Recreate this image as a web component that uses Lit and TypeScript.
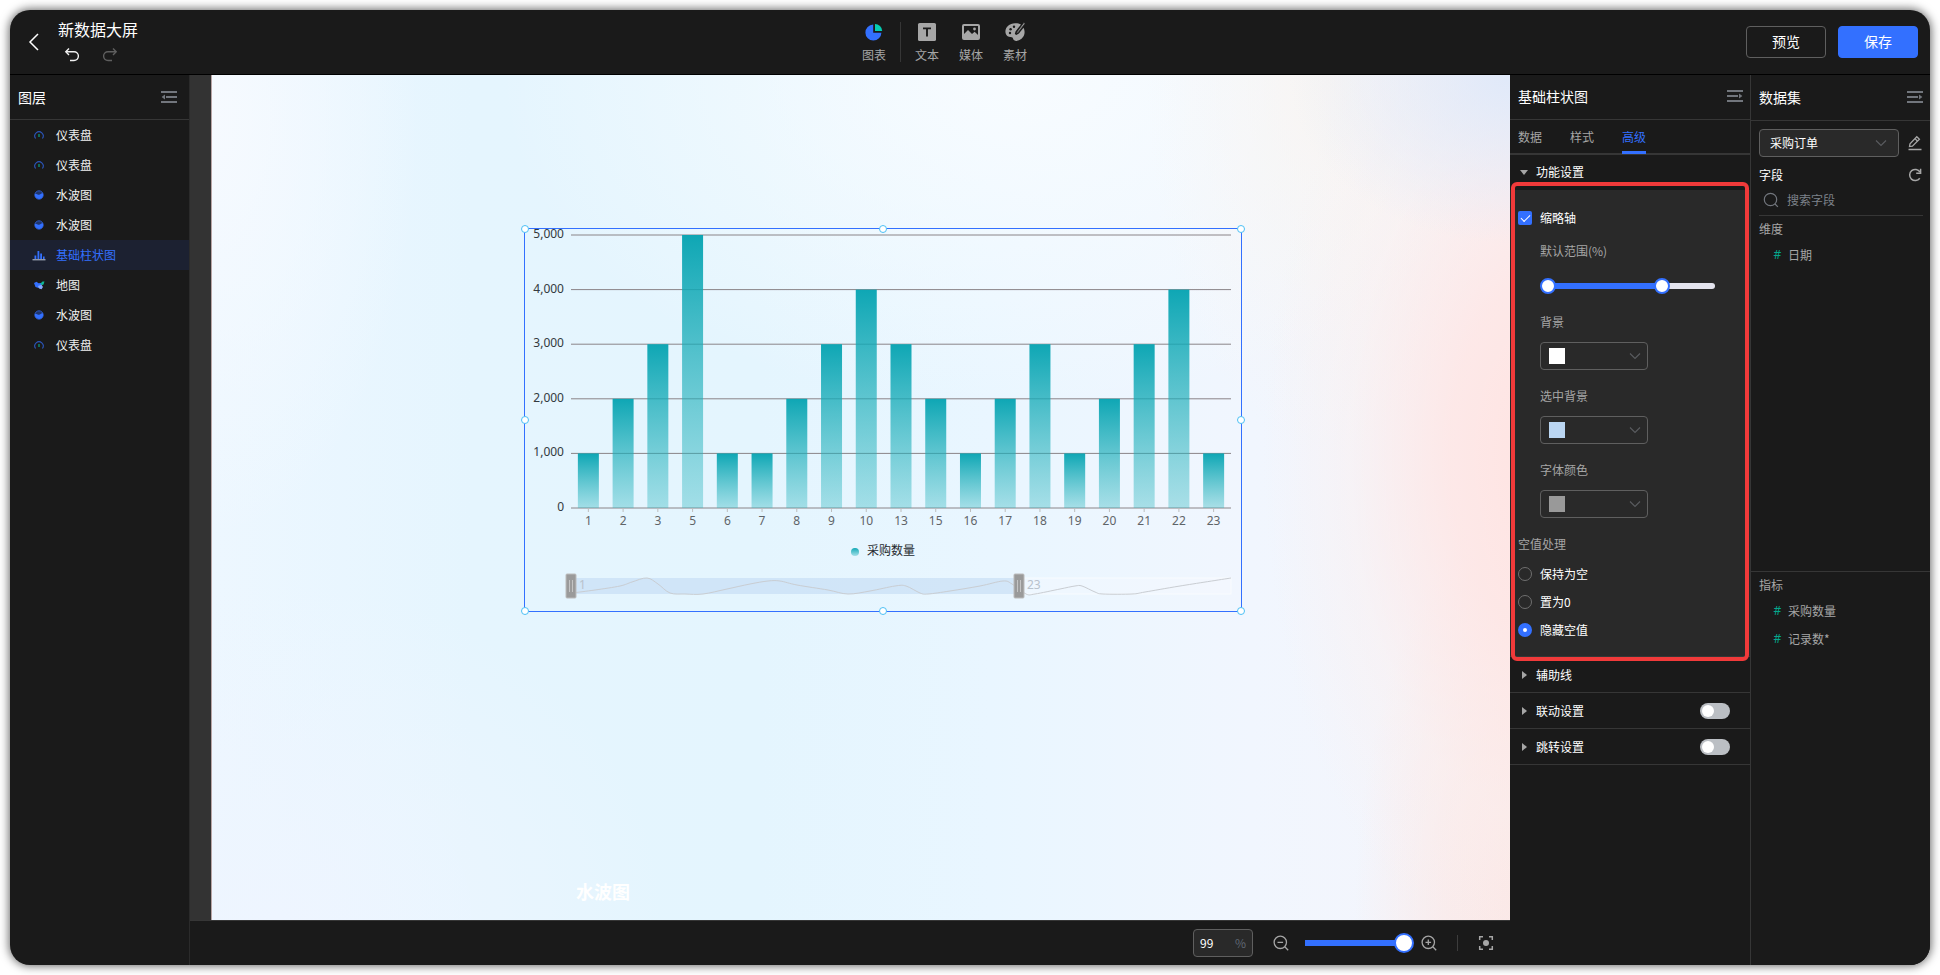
import { LitElement, html, css, svg } from "lit";
import { customElement, state } from "lit/decorators.js";
import { classMap } from "lit/directives/class-map.js";

const icons = {
  back: svg`<svg width="20" height="20" viewBox="0 0 20 20" fill="none" stroke="#fff" stroke-width="1.5"><path d="M14 2 6 10l8 8"/></svg>`,
  undo: svg`<svg width="16" height="16" viewBox="0 0 16 16" fill="none" stroke="#f0f0f0" stroke-width="1.4"><path d="M5 1.5 1.8 4.7 5 7.9"/><path d="M2 4.7h8a4.4 4.4 0 0 1 0 8.8H6"/></svg>`,
  redo: svg`<svg width="16" height="16" viewBox="0 0 16 16" fill="none" stroke="#5f5f5f" stroke-width="1.4"><path d="M11 1.5l3.2 3.2L11 7.9"/><path d="M14 4.7H6a4.4 4.4 0 0 0 0 8.8h4"/></svg>`,
  pie: svg`<svg width="20" height="20" viewBox="0 0 20 20"><path d="M9.2 2.6a8 8 0 1 0 8.2 8.2H9.2z" fill="#3370ff"/><path d="M11 2a7.3 7.3 0 0 1 7.2 7H11z" fill="#04cdb1"/></svg>`,
  text: svg`<svg width="20" height="20" viewBox="0 0 20 20"><rect x="1" y="1" width="18" height="18" rx="1.6" fill="#a6a6a6"/><path d="M6 6.4h8M10 6.4v8" stroke="#1a1a1a" stroke-width="1.9"/></svg>`,
  media: svg`<svg width="20" height="20" viewBox="0 0 20 20"><rect x="2" y="3" width="16" height="14" rx="1" fill="none" stroke="#a6a6a6" stroke-width="2"/><path d="M2.5 12.5 7 8l4 4 2.6-2.2 4 3.7V17h-15z" fill="#a6a6a6"/><circle cx="13.5" cy="7" r="1.4" fill="#a6a6a6"/></svg>`,
  palette: svg`<svg width="20" height="20" viewBox="0 0 20 20"><path d="M16 2.6C14 1.4 12 1.2 10 1.3 4.6 1.5.4 5 .4 9.6c0 3 1.9 5.4 4.9 5.3 2-.1 2.5.6 2.8 1.9.5 1.9 2.6 2.6 5 1.8 3.9-1.3 6.5-4.5 6.5-8.6 0-1.7-.4-3.1-1.1-4.3l-4.6 5.7-2.6 1.6-1.5-.9.7-2.6z" fill="#a6a6a6"/><path d="M18.9.6 12.4 9.4l-1 2 1.9-1.2L20 1.5z" fill="#a6a6a6" stroke="#1a1a1a" stroke-width=".5"/><g fill="#1a1a1a"><circle cx="5" cy="11" r="1.2"/><circle cx="5.6" cy="7.3" r="1.2"/><circle cx="9" cy="4.8" r="1.2"/></g></svg>`,
  foldLeft: svg`<svg width="16" height="16" viewBox="0 0 16 16" fill="none" stroke="#72767d" stroke-width="2"><path d="M0 3h16M5 8h11M0 13h16"/><path d="M4 5.5v5L.6 8z" fill="#72767d" stroke="none"/></svg>`,
  foldRight: svg`<svg width="16" height="16" viewBox="0 0 16 16" fill="none" stroke="#72767d" stroke-width="2"><path d="M0 3h16M0 8h11M0 13h16"/><path d="M12 5.5v5L15.4 8z" fill="#72767d" stroke="none"/></svg>`,
  edit: svg`<svg width="16" height="16" viewBox="0 0 16 16" fill="none" stroke="#a6a6a6" stroke-width="1.3"><path d="M2.5 11.5 3 8.7l6.8-7 2.6 2.5-7 7z"/><path d="M1.5 14.5h13"/><path d="m8 3.6 2.6 2.6"/></svg>`,
  refresh: svg`<svg width="16" height="16" viewBox="0 0 16 16" fill="none" stroke="#a6a6a6" stroke-width="1.5"><path d="M12.8 11.3A5.6 5.6 0 1 1 13 5"/><path d="M13.6 1.8v4.400H9.200"/></svg>`,
  search: svg`<svg width="16" height="16" viewBox="0 0 16 16" fill="none" stroke="#72767d" stroke-width="1.2"><circle cx="7.5" cy="7.5" r="6.2"/><path d="m12 12 2.900 2.900"/></svg>`,
  zoomOut: svg`<svg width="16" height="16" viewBox="0 0 16 16" fill="none" stroke="#a6a6a6" stroke-width="1.3"><circle cx="7.3" cy="7.3" r="6.2"/><path d="m11.8 11.8 3.4 3.4M4.5 7.3h5.6"/></svg>`,
  zoomIn: svg`<svg width="16" height="16" viewBox="0 0 16 16" fill="none" stroke="#a6a6a6" stroke-width="1.3"><circle cx="7.3" cy="7.3" r="6.2"/><path d="m11.8 11.8 3.4 3.4M4.5 7.3h5.6M7.3 4.5v5.6"/></svg>`,
  focus: svg`<svg width="16" height="16" viewBox="0 0 16 16" fill="none" stroke="#a6a6a6" stroke-width="1.5"><path d="M1.7 5V1.7H5M11 1.7h3.3V5M14.3 11v3.3H11M5 14.3H1.7V11"/><circle cx="8" cy="8" r="3" fill="#a6a6a6" stroke="none"/></svg>`,
  chevron: svg`<svg class="chev" width="12" height="12" viewBox="0 0 12 12" fill="none" stroke="#5a5c60" stroke-width="1.1"><path d="m1 3.500 5 5 5-5"/></svg>`,
};

const layerIcons: Record<string, unknown> = {
  gauge: svg`<svg width="14" height="14" viewBox="0 0 14 14"><path d="M3.600 10.500a4.200 4.200 0 1 1 6.800 0" fill="none" stroke="#2b56bd" stroke-width="1.100"/><path d="M7 6v3" stroke="#0b8f78" stroke-width="1.400"/></svg>`,
  liquid: svg`<svg width="14" height="14" viewBox="0 0 14 14"><circle cx="7" cy="7" r="4.200" fill="#1f366f" stroke="#2c56bd" stroke-width="1"/><path d="M2.900 6c1.500-1 2.600 1 4.100.8S9.500 4.500 11 5.500a4.200 4.200 0 1 1-8.100.5z" fill="#3370ff"/></svg>`,
  bar: svg`<svg width="14" height="14" viewBox="0 0 14 14"><path d="M2.500 7.500h1.800V11H2.500zM5.500 3h1.800v8H5.500zM8.200 5.500H10V11H8.200zM11 8.500h1.600V11H11z" fill="#3370ff"/><path d="M.5 11.800h13" stroke="#c4cbdc" stroke-width="1"/></svg>`,
  map: svg`<svg width="14" height="14" viewBox="0 0 14 14"><path d="M2 5 4.500 3.800l2 1.500L9 5l.5 2.500L6.500 10 3.500 9z" fill="#3370ff"/><path d="M8.500 5.500 10.500 3.500H12.500L11.500 6.500l-2 .8z" fill="#0fb795"/><path d="m6 8 3.500-1.300 1.500 2.300-1.500 2.300-2.500-.8z" fill="#85a9ff"/></svg>`,
};

const layers = [
  ["gauge", "仪表盘"], ["gauge", "仪表盘"], ["liquid", "水波图"], ["liquid", "水波图"],
  ["bar", "基础柱状图"], ["map", "地图"], ["liquid", "水波图"], ["gauge", "仪表盘"],
];

const series: [string, number][] = [
  ["1", 1000], ["2", 2000], ["3", 3000], ["5", 5000], ["6", 1000], ["7", 1000], ["8", 2000],
  ["9", 3000], ["10", 4000], ["13", 3000], ["15", 2000], ["16", 1000], ["17", 2000], ["18", 3000],
  ["19", 1000], ["20", 2000], ["21", 3000], ["22", 4000], ["23", 1000],
];

const overview: [number, number][] = [
  [47, 364], [70, 361], [95, 357], [107, 353], [122, 349], [133, 355], [145, 364], [160, 365], [178, 365],
  [202, 360], [225, 355], [243, 352], [255, 352], [272, 356], [303, 361], [323, 365], [345, 362],
  [370, 357], [381, 357], [395, 364], [403, 365], [425, 362], [455, 357], [478, 352], [487, 355],
  [501, 365], [510, 365], [535, 360], [550, 357], [557, 357], [570, 363], [578, 365], [607, 365],
  [620, 363], [655, 357], [706, 349],
];

function smooth(points: [number, number][]): string {
  let d = `M${points[0][0]} ${points[0][1]}`;
  for (let i = 0; i < points.length - 1; i++) {
    const p = points[Math.max(0, i - 1)], a = points[i], b = points[i + 1];
    const n = points[Math.min(points.length - 1, i + 2)];
    d += `C${a[0] + (b[0] - p[0]) / 6} ${a[1] + (b[1] - p[1]) / 6} ${b[0] - (n[0] - a[0]) / 6} ${b[1] - (n[1] - a[1]) / 6} ${b[0]} ${b[1]}`;
  }
  return d;
}

const controls = css`
  :host { box-sizing: border-box; font-family: "Noto Sans CJK SC", "Noto Sans", sans-serif; font-size: 12px; line-height: 20px; color: #fff; }
  * { box-sizing: border-box; }
  button, input, select { font: inherit; color: inherit; margin: 0; }
  button { background: none; border: 0; padding: 0; cursor: pointer; }
  svg { display: block; flex: none; }
  .icon { display: grid; place-items: center; }
  .head { display: flex; align-items: center; justify-content: space-between; height: 45px; padding: 0 7px 2px 8px; border-bottom: 1px solid #363636; }
  .title { margin: 0; font-size: 14px; font-weight: 400; }
`;

@customElement("bar-chart")
class BarChart extends LitElement {
  static styles = css`
    :host { display: block; }
    svg { display: block; width: 100%; height: 100%; overflow: visible; }
    text { font-family: "Noto Sans", "Noto Sans CJK SC", sans-serif; font-size: 12px; }
    .value { fill: #333a40; text-anchor: end; }
    .category { fill: #5f6468; text-anchor: middle; }
    .legend { fill: #25292e; }
    .range { fill: #b9c2cc; }
    .grid { stroke: #8a8488; }
    .tick { stroke: #bdbdbd; }
    .trend { fill: none; stroke: #c9cdd2; }
    .selected { fill: #bcd6f2; fill-opacity: 0.5; }
    .rest { fill: #fff; fill-opacity: 0.2; stroke: #fff; stroke-opacity: 0.6; }
    .handle { fill: #9a9a9a; stroke: #bcbcbc; }
    .grip { stroke: #c4c4c4; }
  `;

  render() {
    const left = 46, right = 706, top = 6, bottom = 279;
    const step = (right - left) / series.length;
    const y = (v: number) => bottom - ((bottom - top) * v) / 5000;
    return html`<svg viewBox="0 0 716 382" role="img" aria-label="采购数量">
      <defs>
        <linearGradient id="fill" x1="0" y1="0" x2="0" y2="1">
          <stop offset="0" stop-color="#0aa5b3" stop-opacity="0.98"></stop>
          <stop offset="1" stop-color="#2cb6bf" stop-opacity="0.36"></stop>
        </linearGradient>
      </defs>
      ${[0, 1000, 2000, 3000, 4000, 5000].map((v) => svg`
        <line class="grid" x1=${left} x2=${right} y1=${y(v)} y2=${y(v)}></line>
        <text class="value" x="39" y=${y(v) + 3}>${v.toLocaleString("en-US")}</text>`)}
      ${series.map(([name, v], i) => {
        const x = left + step * (i + 0.5);
        return svg`
          <rect x=${x - 10.5} y=${y(v)} width="21" height=${bottom - y(v)} fill="url(#fill)"></rect>
          <line class="tick" x1=${x} x2=${x} y1=${bottom} y2=${bottom + 4}></line>
          <text class="category" x=${x} y="296">${name}</text>`;
      })}
      <circle cx="330" cy="323" r="4" fill="url(#fill)"></circle>
      <text class="legend" x="342" y="326">采购数量</text>
      <rect class="selected" x="46" y="349" width="448" height="16"></rect>
      <rect class="rest" x="494" y="349" width="212" height="16"></rect>
      <path class="trend" d=${smooth(overview)}></path>
      <text class="range" x="54" y="360">1</text>
      <text class="range" x="502" y="360">23</text>
      ${[46, 494].map((x) => svg`
        <rect class="handle" x=${x - 5} y="345" width="10" height="24" rx="1"></rect>
        <path class="grip" d="M${x - 1.5} 351v12M${x + 1.5} 351v12"></path>`)}
    </svg>`;
  }
}

@customElement("settings-panel")
class SettingsPanel extends LitElement {
  @state() private mode = "hide";

  static styles = [controls, css`
    :host { display: flex; flex-direction: column; background: #1a1a1a; }
    .tabs { display: flex; gap: 28px; height: 35px; padding: 0 8px; border-bottom: 2px solid #363636; }
    .tab { height: 34px; padding-top: 2px; color: #a6a6a6; border-bottom: 3px solid transparent; }
    .tab.on { color: #3370ff; border-color: #3370ff; }
    .row { display: flex; align-items: center; justify-content: space-between; height: 36px; padding: 0 20px 0 10px; border-bottom: 1px solid #363636; }
    .row.open { height: 35px; padding-bottom: 2px; border: 0; }
    .fold { display: flex; align-items: center; gap: 8px; }
    .caret { width: 8px; height: 8px; fill: #a6a6a6; }
    .open .caret { transform: rotate(90deg); }
    .group { position: relative; padding: 18px 8px 16px; background: #292929; border-bottom: 1px solid #363636; }
    .mark { position: absolute; inset: -8px 1px -5px 1px; border: 4px solid #f13a3a; border-radius: 6px; pointer-events: none; }
    .choice { display: flex; align-items: center; gap: 8px; }
    .box, .dot { appearance: none; width: 14px; height: 14px; background: none; }
    .box { border-radius: 2px; background: #3370ff; display: grid; place-items: center; }
    .box::before { content: ""; width: 8px; height: 4px; border: solid #fff; border-width: 0 0 1px 1px; transform: rotate(-45deg) translate(1px, -1px); }
    .box:not(:checked) { background: none; border: 1px solid #6b6b6b; }
    .box:not(:checked)::before { content: none; }
    .dot { border: 1px solid #6f6f6f; border-radius: 50%; }
    .dot:checked { border: 5px solid #3370ff; background: #fff; }
    .fields { padding: 13px 19px 0 22px; }
    .label { display: block; color: #a6a6a6; }
    .slider { display: grid; align-items: center; height: 20px; margin: 15px 0 16px; width: 183px; }
    .slider > * { grid-area: 1 / 1; }
    .track { height: 6px; margin: 0 8px; border-radius: 3px; background: linear-gradient(90deg, #3370ff 68%, #e4e4ee 68%); }
    .thumb { appearance: none; width: 100%; height: 16px; background: none; pointer-events: none; }
    .thumb::-webkit-slider-thumb { appearance: none; width: 16px; height: 16px; border: 2px solid #3370ff; border-radius: 50%; background: #fff; pointer-events: auto; }
    .pick { display: grid; align-items: center; width: 108px; margin: 10px 0 16px; }
    .pick > * { grid-area: 1 / 1; }
    .pick select { appearance: none; width: 100%; height: 28px; border: 1px solid #5f5f5f; border-radius: 4px; background: none; color: transparent; }
    .swatch { width: 16px; height: 16px; margin-left: 9px; pointer-events: none; }
    .chev { justify-self: end; margin-right: 7px; pointer-events: none; }
    .modes { display: grid; gap: 8px; margin: 0; padding: 0; border: 0; }
    .modes legend { padding: 0 0 10px; color: #a6a6a6; }
    .switch { appearance: none; width: 30px; height: 16px; padding: 2px; border-radius: 8px; background: #bbbfc4; }
    .switch::before { content: ""; display: block; width: 12px; height: 12px; border-radius: 50%; background: #fff; }
    .switch:checked { background: #3370ff; }
    .switch:checked::before { margin-left: 14px; }
  `];

  private fold(name: string, open = false, toggle = false) {
    return html`<div class=${classMap({ row: true, open })}>
      <button class="fold" aria-expanded=${open}>
        <svg class="caret" viewBox="0 0 8 8"><path d="M2 0l5 4-5 4z"></path></svg>${name}
      </button>
      ${toggle ? html`<input class="switch" type="checkbox" role="switch" aria-label=${name}>` : ""}
    </div>`;
  }

  private color(id: string, name: string, value: string) {
    return html`<label class="label" for=${id}>${name}</label>
      <div class="pick">
        <select id=${id}><option></option></select>
        <span class="swatch" style="background:${value}"></span>${icons.chevron}
      </div>`;
  }

  render() {
    const modes = [["keep", "保持为空"], ["zero", "置为0"], ["hide", "隐藏空值"]];
    return html`
      <header class="head"><h2 class="title">基础柱状图</h2><button class="icon" aria-label="收起">${icons.foldRight}</button></header>
      <nav class="tabs">
        ${["数据", "样式", "高级"].map((t) => html`<button class=${classMap({ tab: true, on: t === "高级" })}>${t}</button>`)}
      </nav>
      ${this.fold("功能设置", true)}
      <section class="group">
        <label class="choice"><input class="box" type="checkbox" checked>缩略轴</label>
        <div class="fields">
          <span class="label">默认范围(%)</span>
          <div class="slider">
            <span class="track"></span>
            <input class="thumb" type="range" value="0" aria-label="默认范围起点">
            <input class="thumb" type="range" value="68" aria-label="默认范围终点">
          </div>
          ${this.color("bg", "背景", "#ffffff")}
          ${this.color("active-bg", "选中背景", "#bad5f1")}
          ${this.color("font", "字体颜色", "#999999")}
        </div>
        <fieldset class="modes">
          <legend>空值处理</legend>
          ${modes.map(([id, name]) => html`<label class="choice"><input class="dot" type="radio" name="mode" .checked=${this.mode === id} @change=${() => (this.mode = id)}>${name}</label>`)}
        </fieldset>
        <div class="mark"></div>
      </section>
      ${this.fold("辅助线")}
      ${this.fold("联动设置", false, true)}
      ${this.fold("跳转设置", false, true)}`;
  }
}

@customElement("dataset-panel")
class DatasetPanel extends LitElement {
  static styles = [controls, css`
    :host { display: flex; flex-direction: column; background: #1a1a1a; border-left: 1px solid #363636; }
    .line { display: flex; align-items: center; justify-content: space-between; padding: 0 7px 0 8px; }
    .head { height: 46px; }
    .source { margin: 8px 0; gap: 8px; }
    .pick { display: grid; align-items: center; flex: 1; }
    .pick > * { grid-area: 1 / 1; }
    .pick select { appearance: none; width: 100%; height: 28px; padding: 0 10px; border: 1px solid #5f5f5f; border-radius: 4px; background: #292929; }
    .chev { justify-self: end; margin-right: 12px; pointer-events: none; }
    .find { display: flex; align-items: center; gap: 8px; height: 31px; margin: 0 7px 0 8px; padding-left: 4px; border-bottom: 1px solid #363636; }
    .find input { flex: 1; min-width: 0; padding: 0; border: 0; background: none; outline: none; }
    .find input::placeholder { color: #7d828a; opacity: 1; }
    .part { flex: 9 1 0; padding: 3px 8px; color: #a6a6a6; }
    .part + .part { flex-grow: 10; border-top: 1px solid #363636; }
    .name { margin: 0 0 6px; font-size: 12px; font-weight: 400; }
    .list { display: grid; gap: 8px; margin: 0; padding: 0 0 0 14px; list-style: none; }
    .list li { display: flex; align-items: center; gap: 6px; }
    .hash { color: #04a78c; font-family: "Noto Sans", sans-serif; width: 9px; text-align: center; }
  `];

  private part(name: string, fields: string[]) {
    return html`<section class="part"><h3 class="name">${name}</h3>
      <ul class="list">${fields.map((f) => html`<li><span class="hash">#</span>${f}</li>`)}</ul></section>`;
  }

  render() {
    return html`
      <header class="head"><h2 class="title">数据集</h2><button class="icon" aria-label="收起">${icons.foldRight}</button></header>
      <div class="line source">
        <div class="pick"><select aria-label="数据集"><option>采购订单</option></select>${icons.chevron}</div>
        <button class="icon" aria-label="编辑">${icons.edit}</button>
      </div>
      <div class="line"><span>字段</span><button class="icon" aria-label="刷新">${icons.refresh}</button></div>
      <label class="find">${icons.search}<input type="text" placeholder="搜索字段" aria-label="搜索字段"></label>
      ${this.part("维度", ["日期"])}
      ${this.part("指标", ["采购数量", "记录数*"])}`;
  }
}

@customElement("app-root")
class AppRoot extends LitElement {
  static styles = [controls, css`
    :host { display: flex; min-height: 100vh; padding: 10px; background: #fff; }
    .frame { flex: 1; min-width: 0; display: flex; flex-direction: column; overflow: hidden; border-radius: 20px; background: #1a1a1a; box-shadow: 0 0 10px 1px rgba(0, 0, 0, 0.6); }
    .top { display: flex; align-items: center; justify-content: space-between; height: 65px; padding: 0 12px 0 14px; border-bottom: 1px solid #000; }
    .doc { display: flex; align-items: center; gap: 14px; }
    .doc-text { min-width: 85px; display: grid; gap: 8px; padding-bottom: 2px; }
    .doc-name { margin: 0; font-size: 16px; line-height: 20px; font-weight: 400; }
    .history { display: flex; gap: 22px; padding-left: 6px; }
    .tools { display: flex; align-items: center; }
    .tool { display: grid; justify-items: center; gap: 5px; width: 44px; line-height: 16px; color: #a6a6a6; }
    .split { width: 1px; height: 40px; margin: 0 4px; background: #363636; }
    .actions { display: flex; gap: 12px; }
    .action { width: 80px; height: 32px; padding-bottom: 2px; border: 1px solid #5f5f5f; border-radius: 4px; font-size: 14px; }
    .action.primary { background: #3370ff; border-color: #3370ff; }
    .work { flex: 1; display: grid; grid-template-columns: 180px minmax(0, 1fr) 240px 180px; }
    .layers { border-right: 1px solid #2b2b2b; }
    .layers .head { padding: 0 12px 0 8px; }
    .layer { display: flex; align-items: center; gap: 10px; width: 100%; height: 30px; padding-left: 22px; color: #f0f0f0; }
    .layer.on { background: #1c2131; color: #3370ff; }
    .center { display: flex; flex-direction: column; }
    .stage { flex: 1; display: flex; padding-left: 21px; background: #333; }
    .canvas {
      position: relative; flex: 1; border-left: 1px solid #b9a5a5;
      background:
        radial-gradient(ellipse 17% 20% at 100% 0%, #e0e9f9 0%, rgba(226, 234, 249, 0) 100%),
        radial-gradient(ellipse 22% 62% at 103% 45%, #ffe3e1 0%, rgba(255, 229, 227, 0.8) 35%, rgba(252, 238, 236, 0.4) 70%, rgba(250, 240, 240, 0) 100%),
        radial-gradient(ellipse 14% 50% at 102% 100%, #fbe6e4 0%, rgba(251, 232, 230, 0.7) 50%, rgba(251, 232, 230, 0) 100%),
        radial-gradient(ellipse 14% 45% at 86% 0%, rgba(249, 244, 240, 0.8) 0%, rgba(249, 244, 240, 0) 100%),
        radial-gradient(ellipse 40% 40% at 62% 0%, #f8fcff 0%, rgba(248, 252, 255, 0) 100%),
        radial-gradient(ellipse 16% 50% at 0% 5%, #f6faff 0%, rgba(246, 250, 255, 0) 100%),
        radial-gradient(ellipse 30% 40% at 5% 100%, #eef5ff 0%, rgba(238, 246, 255, 0) 100%),
        linear-gradient(90deg, #edf7ff 0%, #e5f5fe 20%, #e4f5fe 42%, #e9f6ff 60%, #f1f6fe 80%, #f5f5fb 100%);
    }
    .widget { position: absolute; left: 312px; top: 153px; width: 718px; height: 384px; border: 1px solid #3370ff; }
    .widget bar-chart { width: 100%; height: 100%; }
    .knob { position: absolute; width: 8px; height: 8px; margin: -4px; border: 1px solid #4cc0f5; border-radius: 50%; background: #fff; }
    .caption { position: absolute; left: 364px; top: 802px; font-size: 18px; line-height: 28px; font-weight: 700; }
    .bottom { display: flex; align-items: center; justify-content: flex-end; height: 45px; padding-right: 16px; border-top: 1px solid #363636; }
    .percent { display: flex; align-items: center; width: 60px; height: 28px; margin-right: 20px; padding: 0 6px; border: 1px solid #5f5f5f; border-radius: 4px; background: #292929; color: #5f6773; }
    .percent input { flex: 1; min-width: 0; padding: 0; border: 0; background: none; outline: none; color: #fff; }
    .zoom { appearance: none; width: 120px; height: 20px; margin: 0 6px; background: linear-gradient(#3370ff, #3370ff) 10px 50% / 100px 6px no-repeat; }
    .zoom::-webkit-slider-thumb { appearance: none; width: 20px; height: 20px; border: 2px solid #3370ff; border-radius: 50%; background: #fff; }
    .bar { width: 1px; height: 16px; margin: 0 20px; background: #3d3d3d; }
  `];

  render() {
    const knobs = [[0, 0], [50, 0], [100, 0], [0, 50], [100, 50], [0, 100], [50, 100], [100, 100]];
    const tool = (icon: unknown, name: string) => html`<button class="tool">${icon}<span>${name}</span></button>`;
    return html`<div class="frame">
      <header class="top">
        <div class="doc">
          <button class="icon" aria-label="返回">${icons.back}</button>
          <div class="doc-text">
            <h1 class="doc-name">新数据大屏</h1>
            <div class="history">
              <button class="icon" aria-label="撤销">${icons.undo}</button>
              <button class="icon" aria-label="重做">${icons.redo}</button>
            </div>
          </div>
        </div>
        <nav class="tools">
          ${tool(icons.pie, "图表")}<span class="split"></span>
          ${tool(icons.text, "文本")}${tool(icons.media, "媒体")}${tool(icons.palette, "素材")}
        </nav>
        <div class="actions"><button class="action">预览</button><button class="action primary">保存</button></div>
      </header>
      <div class="work">
        <aside class="layers">
          <header class="head"><h2 class="title">图层</h2><button class="icon" aria-label="收起">${icons.foldLeft}</button></header>
          ${layers.map(([kind, name]) => html`<button class=${classMap({ layer: true, on: kind === "bar" })}>${layerIcons[kind]}${name}</button>`)}
        </aside>
        <main class="center">
          <div class="stage"><div class="canvas">
            <div class="widget"><bar-chart></bar-chart>
              ${knobs.map(([x, y]) => html`<span class="knob" style="left:${x}%;top:${y}%"></span>`)}
            </div>
            <span class="caption">水波图</span>
          </div></div>
          <footer class="bottom">
            <label class="percent"><input type="text" value="99" aria-label="缩放比例">%</label>
            <button class="icon" aria-label="缩小">${icons.zoomOut}</button>
            <input class="zoom" type="range" value="99" aria-label="缩放">
            <button class="icon" aria-label="放大">${icons.zoomIn}</button>
            <span class="bar"></span>
            <button class="icon" aria-label="适应画布">${icons.focus}</button>
          </footer>
        </main>
        <settings-panel></settings-panel>
        <dataset-panel></dataset-panel>
      </div>
    </div>`;
  }
}
